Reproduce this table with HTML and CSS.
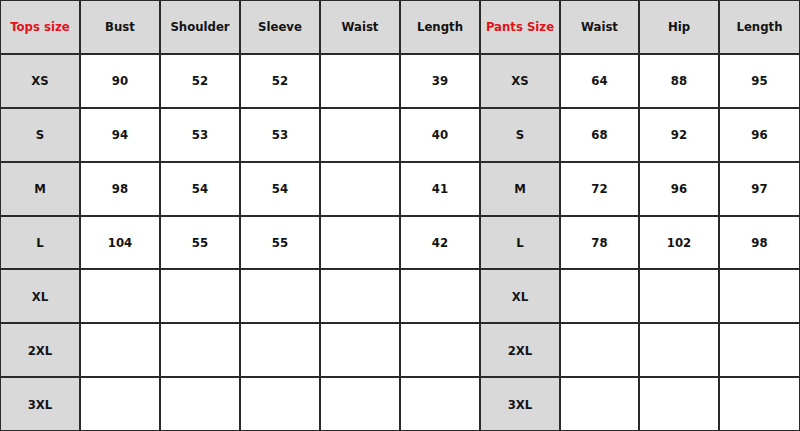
FILE: index.html
```html
<!DOCTYPE html>
<html>
<head>
<meta charset="utf-8">
<link rel="stylesheet" href="styles.css">
</head>
<body>
<div class="chart">
  <div class="c g red">Tops size</div><div class="c g">Bust</div><div class="c g">Shoulder</div><div class="c g">Sleeve</div><div class="c g">Waist</div><div class="c g">Length</div><div class="c g red">Pants Size</div><div class="c g">Waist</div><div class="c g">Hip</div><div class="c g">Length</div>

  <div class="c g">XS</div><div class="c">90</div><div class="c">52</div><div class="c">52</div><div class="c"></div><div class="c">39</div><div class="c g">XS</div><div class="c">64</div><div class="c">88</div><div class="c">95</div>

  <div class="c g">S</div><div class="c">94</div><div class="c">53</div><div class="c">53</div><div class="c"></div><div class="c">40</div><div class="c g">S</div><div class="c">68</div><div class="c">92</div><div class="c">96</div>

  <div class="c g">M</div><div class="c">98</div><div class="c">54</div><div class="c">54</div><div class="c"></div><div class="c">41</div><div class="c g">M</div><div class="c">72</div><div class="c">96</div><div class="c">97</div>

  <div class="c g">L</div><div class="c">104</div><div class="c">55</div><div class="c">55</div><div class="c"></div><div class="c">42</div><div class="c g">L</div><div class="c">78</div><div class="c">102</div><div class="c">98</div>

  <div class="c g">XL</div><div class="c"></div><div class="c"></div><div class="c"></div><div class="c"></div><div class="c"></div><div class="c g">XL</div><div class="c"></div><div class="c"></div><div class="c"></div>

  <div class="c g">2XL</div><div class="c"></div><div class="c"></div><div class="c"></div><div class="c"></div><div class="c"></div><div class="c g">2XL</div><div class="c"></div><div class="c"></div><div class="c"></div>

  <div class="c g">3XL</div><div class="c"></div><div class="c"></div><div class="c"></div><div class="c"></div><div class="c"></div><div class="c g">3XL</div><div class="c"></div><div class="c"></div><div class="c"></div>
</div>
</body>
</html>
```

FILE: styles.css
```css
html, body {
  margin: 0;
  padding: 0;
  background: #ffffff;
}
.chart {
  width: 800px;
  height: 431px;
  box-sizing: border-box;
  padding: 1px 1px 1px 1px;
  background: #2a2a2a;
  display: grid;
  grid-template-columns: 78px 78px 78px 78px 78px 78px 78px 77px 78px 1fr;
  grid-template-rows: repeat(8, 1fr);
  gap: 2px;
  font-family: "DejaVu Sans Condensed", "DejaVu Sans", sans-serif;
  font-weight: bold;
  font-size: 13px;
  color: #141414;
}
.c {
  background: #ffffff;
  display: flex;
  align-items: center;
  justify-content: center;
}
.g {
  background: #d9d9d9;
}
.red {
  color: #e3131b;
}
```
